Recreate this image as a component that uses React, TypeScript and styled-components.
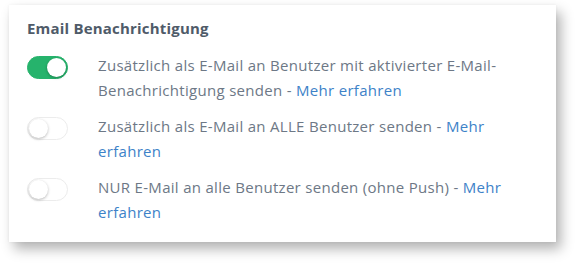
import React, { useState } from "react";
import styled, { createGlobalStyle } from "styled-components";

const Global = createGlobalStyle`
  html, body { margin: 0; padding: 0; background: #ffffff; }
  body { font-family: "Open Sans", "Noto Sans", sans-serif; }
`;

const Page = styled.div`
  width: 576px;
  height: 268px;
  box-sizing: border-box;
  padding: 5px 20px 26px 9px;
  background: #ffffff;
`;

const Card = styled.section`
  background: #ffffff;
  box-shadow: 5px 7px 12px rgba(0, 0, 0, 0.3), 0 0 3px rgba(0, 0, 0, 0.05);
  box-sizing: border-box;
  height: 237px;
  padding: 13px 27px 0 18px;
  display: flex;
  flex-direction: column;
`;

const Title = styled.h3`
  margin: 0 0 15px;
  font-size: 15px;
  font-weight: 700;
  letter-spacing: 0.2px;
  color: #4f5b69;
  line-height: 20px;
`;

const List = styled.div`
  display: flex;
  flex-direction: column;
  gap: 11px;
`;

const Row = styled.label`
  display: grid;
  grid-template-columns: 71px 1fr;
  align-items: start;
  cursor: pointer;
`;

const Track = styled.span<{ $on: boolean }>`
  margin-top: 3px;
  width: 41px;
  height: 23px;
  border-radius: 12px;
  box-sizing: border-box;
  background: ${(p) => (p.$on ? "#26b36c" : "#ffffff")};
  border: 1px solid ${(p) => (p.$on ? "#26b36c" : "#ececec")};
  display: flex;
  align-items: center;
  justify-content: ${(p) => (p.$on ? "flex-end" : "flex-start")};
  padding: 0 1px;
`;

const Knob = styled.span`
  width: 19px;
  height: 19px;
  border-radius: 50%;
  background: #ffffff;
  box-shadow: 0 1px 3px rgba(0, 0, 0, 0.28);
`;

const Text = styled.span`
  font-size: 15px;
  letter-spacing: 0.3px;
  line-height: 25px;
  color: #6d7886;
`;

const Link = styled.a`
  color: #3d82c8;
  text-decoration: none;
`;

const items = [
  { on: true, text: "Zusätzlich als E-Mail an Benutzer mit aktivierter E-Mail-Benachrichtigung senden" },
  { on: false, text: "Zusätzlich als E-Mail an ALLE Benutzer senden" },
  { on: false, text: "NUR E-Mail an alle Benutzer senden (ohne Push)" },
];

export default function App() {
  const [state, setState] = useState(items.map((i) => i.on));
  return (
    <>
      <Global />
      <Page>
        <Card>
          <Title>Email Benachrichtigung</Title>
          <List>
            {items.map((it, i) => (
              <Row key={i} onClick={() => setState((s) => s.map((v, j) => (j === i ? !v : v)))}>
                <Track $on={state[i]}>
                  <Knob />
                </Track>
                <Text>
                  {it.text} - <Link href="#">Mehr erfahren</Link>
                </Text>
              </Row>
            ))}
          </List>
        </Card>
      </Page>
    </>
  );
}
